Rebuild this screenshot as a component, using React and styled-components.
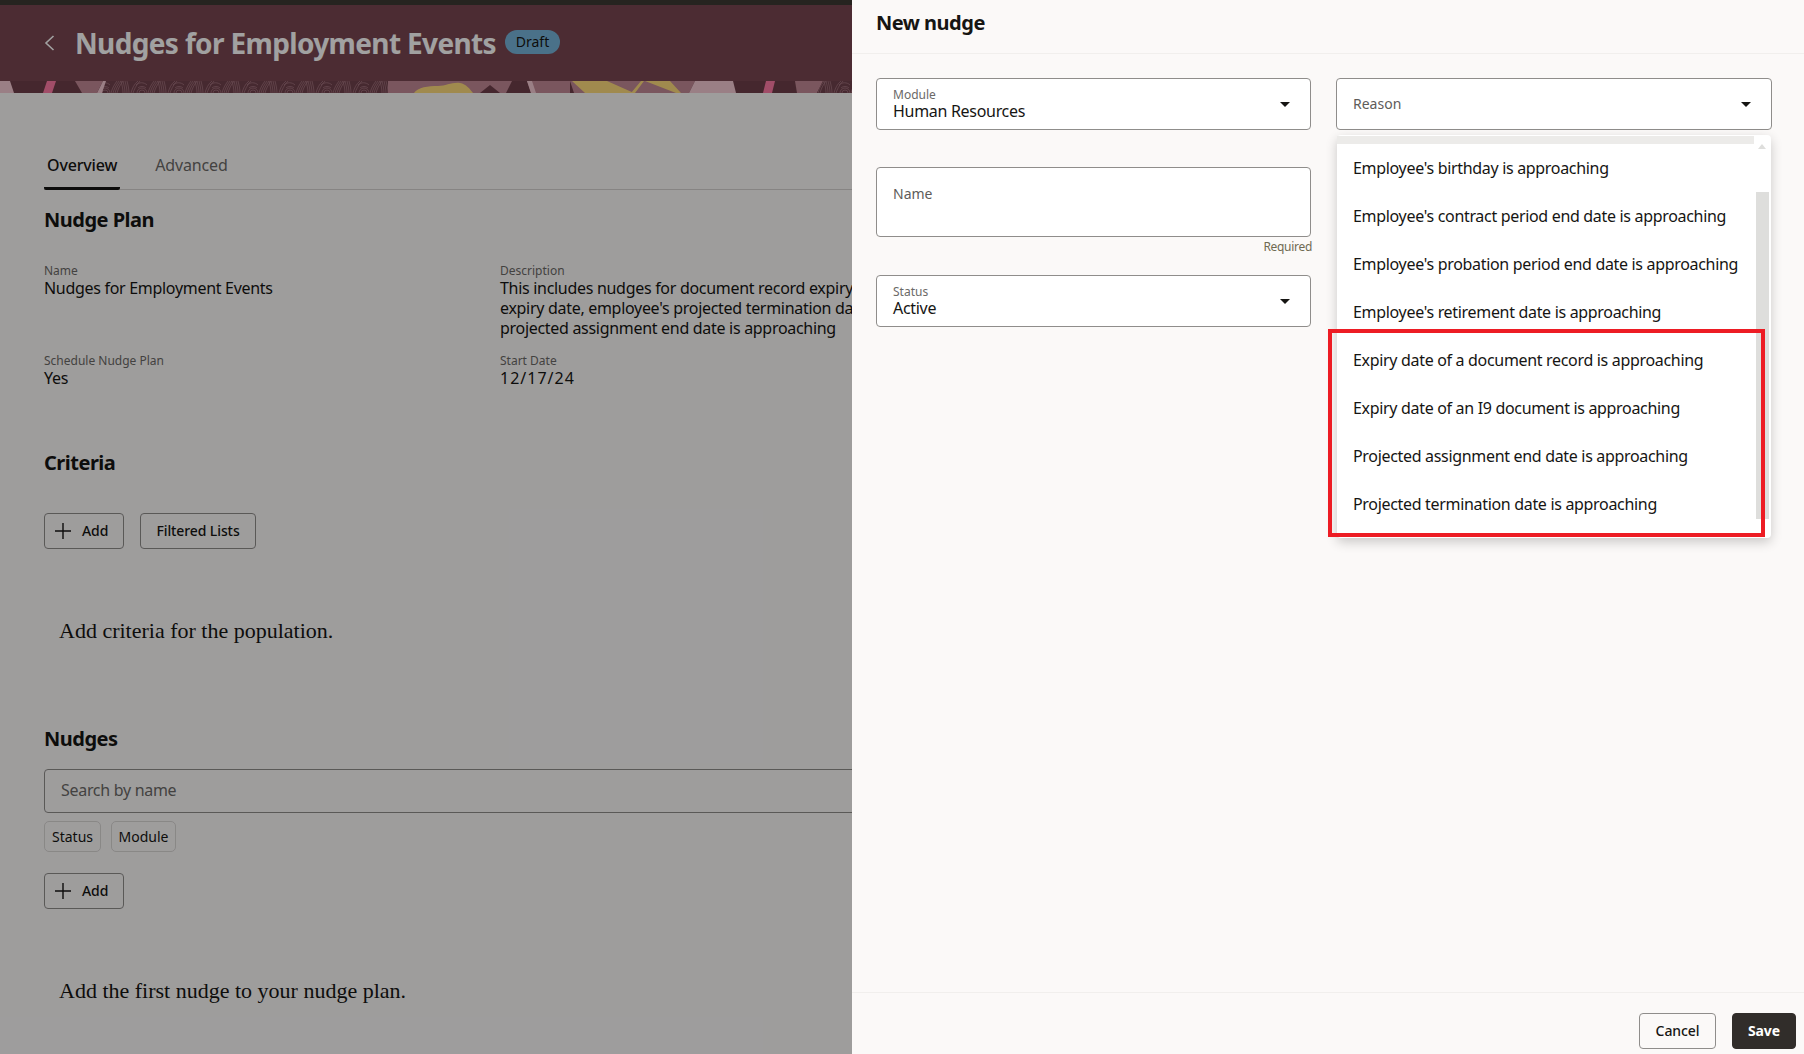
import React from "react";
import styled, { createGlobalStyle } from "styled-components";

const GlobalStyle = createGlobalStyle`
  html, body { margin: 0; padding: 0; height: 100%; overflow: hidden; }
  body { font-family: "Noto Sans", "Open Sans", sans-serif; color: #161513; background: #fbf9f8; }
  * { box-sizing: border-box; }
`;

const Page = styled.div`
  display: flex;
  width: 1804px;
  height: 1054px;
  overflow: hidden;
`;

// everything behind the drawer sits under a scrim
const MainPane = styled.div`
  position: relative;
  width: 852px;
  flex: none;
  overflow: hidden;
  background: #fbf9f8;
  &::after {
    content: "";
    position: absolute;
    inset: 0;
    background: rgba(0, 0, 0, 0.37);
  }
`;

const TopBar = styled.div`
  height: 5px;
  background: #3d3934;
`;

const Banner = styled.div`
  display: flex;
  align-items: center;
  height: 76px;
  padding-left: 44px;
  background: #794751;
  color: #fff;
`;

const BackIcon = styled.svg`
  width: 11px;
  height: 18px;
  margin-right: 20px;
  flex: none;
`;

const Title = styled.h1`
  margin: 0;
  font-size: 28px;
  line-height: 36px;
  font-weight: 700;
  letter-spacing: -0.64px;
  white-space: nowrap;
`;

const Badge = styled.span`
  margin: 0 0 2px 9px;
  width: 55px;
  height: 24px;
  border-radius: 12px;
  background: #76b4da;
  color: #161513;
  font-size: 14px;
  line-height: 23px;
  text-align: center;
`;

const Strip = styled.svg`
  display: block;
  width: 100%;
  height: 12px;
`;

const Content = styled.div`
  padding-left: 44px;
`;

const Tabs = styled.div`
  display: flex;
  gap: 32px;
  height: 47px;
  margin-top: 50px;
  border-bottom: 1px solid #d4d2d0;
`;

const Tab = styled.div`
  height: 47px;
  padding: 11px 3px 0;
  font-size: 16px;
  line-height: 22px;
  letter-spacing: -0.15px;
  font-weight: ${p => (p.$active ? 500 : 400)};
  color: ${p => (p.$active ? "#161513" : "#6b6967")};
  border-bottom: 3px solid ${p => (p.$active ? "#161513" : "transparent")};
  border-radius: 0 0 2px 2px;
`;

const SectionTitle = styled.h2`
  margin: ${p => p.$top}px 0 0;
  font-size: 20px;
  line-height: 28px;
  font-weight: 700;
  letter-spacing: -0.5px;
`;

const Details = styled.div`
  display: grid;
  grid-template-columns: 456px 1fr;
  row-gap: 14px;
  margin-top: 29px;
`;

const Detail = styled.div`
  min-width: 0;
`;

const DetailLabel = styled.div`
  font-size: 12px;
  line-height: 16px;
  color: #6b6967;
`;

const DetailValue = styled.div`
  position: relative;
  top: -1px;
  font-size: 16px;
  line-height: 20px;
  letter-spacing: ${p => (p.$wide ? "1px" : "-0.3px")};
  white-space: nowrap;
`;

const ButtonRow = styled.div`
  display: flex;
  gap: 16px;
  margin-top: ${p => p.$top}px;
`;

const OutlineButton = styled.button`
  display: flex;
  align-items: center;
  justify-content: ${p => (p.$icon ? "flex-start" : "center")};
  gap: 10px;
  width: ${p => p.$width}px;
  height: 36px;
  padding: 0 0 2px ${p => (p.$icon ? 9 : 0)}px;
  background: transparent;
  border: 1px solid #8f8d8b;
  border-radius: 4px;
  color: #161513;
  font-family: inherit;
  font-size: 14px;
  font-weight: 500;
  letter-spacing: -0.1px;
`;

const PlusIcon = styled.svg`
  width: 18px;
  height: 18px;
  margin-top: 2px;
  flex: none;
`;

const EmptyText = styled.p`
  margin: 68px 0 0;
  padding-left: 15px;
  font-family: "Liberation Serif", serif;
  font-size: 22px;
  line-height: 28px;
  color: #161513;
`;

const SearchBox = styled.div`
  display: flex;
  align-items: center;
  height: 44px;
  margin-top: 16px;
  margin-right: -4px;
  padding: 0 0 2px 16px;
  border: 1px solid #8f8d8b;
  border-radius: 4px;
  font-size: 16px;
  letter-spacing: -0.3px;
  color: #6b6967;
`;

const ChipRow = styled.div`
  display: flex;
  gap: 10px;
  margin-top: 8px;
`;

const Chip = styled.div`
  display: flex;
  align-items: center;
  justify-content: center;
  width: ${p => p.$width}px;
  height: 31px;
  border: 1px solid #d9d7d5;
  border-radius: 5px;
  font-size: 14px;
`;

const Drawer = styled.div`
  flex: 1;
  display: flex;
  flex-direction: column;
  background: #fbf9f8;
`;

const DrawerHeader = styled.div`
  flex: none;
  height: 54px;
  padding: 8px 0 0 24px;
  border-bottom: 1px solid #f1efed;
  font-size: 20px;
  line-height: 30px;
  font-weight: 700;
  letter-spacing: -0.5px;
`;

const Form = styled.div`
  flex: 1;
  display: grid;
  grid-template-columns: 435px 436px;
  column-gap: 25px;
  align-content: start;
  padding: 24px 0 0 24px;
`;

const FormColumn = styled.div`
  position: relative;
  display: flex;
  flex-direction: column;
`;

const Field = styled.div`
  display: flex;
  align-items: center;
  justify-content: space-between;
  height: ${p => p.$height || 52}px;
  margin-top: ${p => p.$top || 0}px;
  padding: 0 20px 0 16px;
  background: #fff;
  border: 1px solid #8f8d8b;
  border-radius: 4px;
`;

const FieldText = styled.div`
  display: flex;
  flex-direction: column;
  margin-bottom: 2px;
`;

const FieldLabel = styled.div`
  font-size: 12px;
  line-height: 16px;
  color: #6b6967;
`;

const FieldValue = styled.div`
  margin-top: -1px;
  font-size: 16px;
  line-height: 18px;
  letter-spacing: -0.3px;
`;

const Placeholder = styled.div`
  font-size: 14px;
  line-height: 18px;
  color: #5e5c5a;
`;

const NameField = styled(Field)`
  align-items: flex-start;
  padding-top: 17px;
`;

const Caret = styled.span`
  width: 0;
  height: 0;
  border-left: 5px solid transparent;
  border-right: 5px solid transparent;
  border-top: 5px solid #161513;
`;

const Hint = styled.div`
  margin: 2px -1px 0 0;
  text-align: right;
  font-size: 12px;
  line-height: 16px;
  letter-spacing: -0.3px;
  color: #6f6a52;
`;

const Dropdown = styled.div`
  position: absolute;
  top: 57px;
  left: 1px;
  width: 434px;
  height: 403px;
  padding-top: 9px;
  background: #fff;
  border-radius: 4px;
  box-shadow: 0 4px 12px rgba(0, 0, 0, 0.2);
`;

const DropdownStrip = styled.div`
  position: absolute;
  top: 1px;
  left: 0;
  width: 417px;
  height: 8px;
  background: #ecebe9;
`;

const ScrollThumb = styled.div`
  position: absolute;
  top: 57px;
  right: 2px;
  width: 13px;
  height: 327px;
  background: #dededc;
`;

const ScrollArrow = styled.span`
  position: absolute;
  top: 9px;
  right: 5px;
  width: 0;
  height: 0;
  border-left: 4px solid transparent;
  border-right: 4px solid transparent;
  border-bottom: 5px solid #dededc;
`;

const Option = styled.div`
  display: flex;
  align-items: center;
  height: 48px;
  padding-left: 16px;
  font-size: 16px;
  letter-spacing: -0.32px;
  white-space: nowrap;
`;

const Callout = styled.div`
  position: absolute;
  top: 194px;
  left: -9px;
  width: 437px;
  height: 208px;
  border: 4px solid #ed1c24;
  pointer-events: none;
`;

const DrawerFooter = styled.div`
  flex: none;
  display: flex;
  justify-content: flex-end;
  gap: 16px;
  height: 62px;
  padding: 20px 8px 0 0;
  border-top: 1px solid #f1efed;
`;

const FooterButton = styled.button`
  width: ${p => p.$width}px;
  height: 36px;
  padding: 0 0 2px;
  border-radius: 4px;
  border: 1px solid ${p => (p.$primary ? "#312d2a" : "#8f8d8b")};
  background: ${p => (p.$primary ? "#312d2a" : "transparent")};
  color: ${p => (p.$primary ? "#fff" : "#161513")};
  font-family: inherit;
  font-size: 14px;
  letter-spacing: -0.1px;
  font-weight: ${p => (p.$primary ? 700 : 500)};
`;

const reasons = [
  "Employee's birthday is approaching",
  "Employee's contract period end date is approaching",
  "Employee's probation period end date is approaching",
  "Employee's retirement date is approaching",
  "Expiry date of a document record is approaching",
  "Expiry date of an I9 document is approaching",
  "Projected assignment end date is approaching",
  "Projected termination date is approaching",
];

const Plus = () => (
  <PlusIcon viewBox="0 0 18 18" fill="none" stroke="#161513" strokeWidth="1.4">
    <path d="M9 1v16M1 9h16" />
  </PlusIcon>
);

const BannerPattern = () => (
  <Strip viewBox="0 0 852 12" preserveAspectRatio="none">
    <defs>
      <pattern id="prints" width="37" height="12" patternUnits="userSpaceOnUse">
        <rect width="37" height="12" fill="#6f414c" />
        <path
          d="M0 12C1 8 3 4 6 0M2 12C3 8 5 4 8 0M4 12C5 8 7 4 10 0M6 12c1-4 3-8 6-12M12 12c0-4-1-8-2-12M14 12c0-4-1-8-2-12M16 12c0-4-1-8-2-12M18 12c0-4-1-8-2-12M20 12c1-4 3-9 7-12M22 12c1-3 3-8 7-12M26 12a5 5 0 0 1 10 0M28 12a3 3 0 0 1 6 0M25 4c3-3 8-3 11 0M27 7c2-2 6-2 8 0"
          fill="none"
          stroke="#a97884"
          strokeWidth="0.7"
        />
      </pattern>
    </defs>
    <rect width="852" height="12" fill="#6e3f4a" />
    <path d="M0 0h10l4 12H0z" fill="#f4c9d3" />
    <path d="M47 0h9l-4 12h-9z" fill="#ff7aa5" />
    <path d="M75 0h28l-6 12H82z" fill="#c28895" />
    <path d="M103 0h285v12H97z" fill="url(#prints)" />
    <path d="M97 12l6-12h3l-4 12z" fill="#f4c9d3" />
    <path d="M388 0h124l-6 12h-6l-10-8-10 8H388z" fill="#c28895" />
    <path d="M414 12c4-6 14-7 24-7 8 0 14-4 22-3 6 1 10 6 13 10z" fill="#fedb7c" />
    <path d="M527 0h43v12h-39z" fill="#c28895" />
    <path d="M527 0h5l4 12h-5z" fill="#f4c9d3" />
    <path d="M570 0h125l-6 12H574z" fill="#c28895" />
    <path d="M572 0h35l27 12h-49z" fill="#fedb7c" />
    <path d="M641 0h3l-9 12h-4zM645 0h25l11 12h-5z" fill="#fedb7c" />
    <path d="M695 0h38l3 12h-47z" fill="#f4c9d3" />
    <path d="M766 0h9l-3 12h-9z" fill="#ff7aa5" />
    <path d="M795 0h28l-6 12h-20z" fill="#c28895" />
    <path d="M823 0h29v12h-35z" fill="url(#prints)" />
  </Strip>
);

export default function App() {
  return (
    <Page>
      <GlobalStyle />
      <MainPane>
        <TopBar />
        <Banner>
          <BackIcon viewBox="0 0 11 18" fill="none" stroke="#fff" strokeWidth="1.6">
            <path d="M9.5 2 2 9l7.5 7" />
          </BackIcon>
          <Title>Nudges for Employment Events</Title>
          <Badge>Draft</Badge>
        </Banner>
        <BannerPattern />
        <Content>
          <Tabs>
            <Tab $active>Overview</Tab>
            <Tab>Advanced</Tab>
          </Tabs>
          <SectionTitle $top={16}>Nudge Plan</SectionTitle>
          <Details>
            <Detail>
              <DetailLabel>Name</DetailLabel>
              <DetailValue>Nudges for Employment Events</DetailValue>
            </Detail>
            <Detail>
              <DetailLabel>Description</DetailLabel>
              <DetailValue>This includes nudges for document record expiry</DetailValue>
              <DetailValue>expiry date, employee's projected termination date</DetailValue>
              <DetailValue>projected assignment end date is approaching</DetailValue>
            </Detail>
            <Detail>
              <DetailLabel>Schedule Nudge Plan</DetailLabel>
              <DetailValue>Yes</DetailValue>
            </Detail>
            <Detail>
              <DetailLabel>Start Date</DetailLabel>
              <DetailValue $wide>12/17/24</DetailValue>
            </Detail>
          </Details>
          <SectionTitle $top={60}>Criteria</SectionTitle>
          <ButtonRow $top={36}>
            <OutlineButton $width={80} $icon><Plus />Add</OutlineButton>
            <OutlineButton $width={116}>Filtered Lists</OutlineButton>
          </ButtonRow>
          <EmptyText>Add criteria for the population.</EmptyText>
          <SectionTitle $top={80}>Nudges</SectionTitle>
          <SearchBox>Search by name</SearchBox>
          <ChipRow>
            <Chip $width={57}>Status</Chip>
            <Chip $width={65}>Module</Chip>
          </ChipRow>
          <ButtonRow $top={21}>
            <OutlineButton $width={80} $icon><Plus />Add</OutlineButton>
          </ButtonRow>
          <EmptyText>Add the first nudge to your nudge plan.</EmptyText>
        </Content>
      </MainPane>
      <Drawer>
        <DrawerHeader>New nudge</DrawerHeader>
        <Form>
          <FormColumn>
            <Field>
              <FieldText>
                <FieldLabel>Module</FieldLabel>
                <FieldValue>Human Resources</FieldValue>
              </FieldText>
              <Caret />
            </Field>
            <NameField $height={70} $top={37}>
              <Placeholder>Name</Placeholder>
            </NameField>
            <Hint>Required</Hint>
            <Field $top={20}>
              <FieldText>
                <FieldLabel>Status</FieldLabel>
                <FieldValue>Active</FieldValue>
              </FieldText>
              <Caret />
            </Field>
          </FormColumn>
          <FormColumn>
            <Field>
              <Placeholder>Reason</Placeholder>
              <Caret />
            </Field>
            <Dropdown>
              <DropdownStrip />
              <ScrollArrow />
              <ScrollThumb />
              {reasons.map(reason => (
                <Option key={reason}>{reason}</Option>
              ))}
              <Callout />
            </Dropdown>
          </FormColumn>
        </Form>
        <DrawerFooter>
          <FooterButton $width={77}>Cancel</FooterButton>
          <FooterButton $width={64} $primary>Save</FooterButton>
        </DrawerFooter>
      </Drawer>
    </Page>
  );
}
